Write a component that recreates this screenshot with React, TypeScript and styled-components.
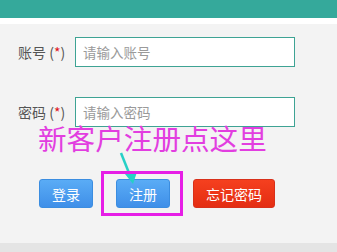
import styled, { createGlobalStyle } from "styled-components";

const GlobalStyle = createGlobalStyle`
  html, body {
    margin: 0;
    padding: 0;
    background: #f3f3f3;
    font-family: "Noto Sans CJK SC", "Noto Sans", sans-serif;
  }
`;

const App = () => {
  return (
    <Page>
      <GlobalStyle />
      <TopBar />
      <Strip />
      <Form>
        <Row>
          <Label>
            账号 (<Star>*</Star>)
          </Label>
          <Input placeholder="请输入账号" />
        </Row>
        <Row>
          <Label>
            密码 (<Star>*</Star>)
          </Label>
          <Input type="text" placeholder="请输入密码" />
        </Row>
        <Buttons>
          <Button>登录</Button>
          <Button>注册</Button>
          <Button $danger $wide>
            忘记密码
          </Button>
        </Buttons>
        <Note>新客户注册点这里</Note>
        <Arrow width="24" height="34" viewBox="0 0 24 34">
          <line x1="3" y1="1" x2="13" y2="26" stroke="#26d0c6" strokeWidth="2.5" />
          <polygon points="7,22 19,20 15,32" fill="#26d0c6" />
        </Arrow>
        <Highlight />
      </Form>
      <Bottom />
    </Page>
  );
};

const Page = styled.div`
  width: 337px;
  height: 252px;
  display: flex;
  flex-direction: column;
  overflow: hidden;
`;

const TopBar = styled.div`
  height: 18px;
  background: #35a99b;
`;

const Strip = styled.div`
  height: 6px;
  background: #ffffff;
`;

const Form = styled.div`
  position: relative;
  flex: 1;
  padding: 13px 0 0 18px;
  display: flex;
  flex-direction: column;
  gap: 30px;
`;

const Row = styled.div`
  display: flex;
  align-items: center;
  height: 30px;
`;

const Label = styled.span`
  width: 57px;
  font-size: 14px;
  line-height: 18px;
  color: #555;
  white-space: nowrap;
`;

const Star = styled.span`
  color: #e0161c;
`;

const Input = styled.input`
  box-sizing: border-box;
  width: 220px;
  height: 30px;
  border: 1px solid #3ea394;
  background: #fff;
  padding: 0 7px;
  font-family: inherit;
  font-size: 13.5px;
  outline: none;

  &::placeholder {
    color: #9a9a9a;
  }
`;

const Buttons = styled.div`
  display: flex;
  gap: 23px;
  margin-left: 21px;
  margin-top: 22px;
`;

const Button = styled.button<{ $danger?: boolean; $wide?: boolean }>`
  width: ${(p) => (p.$wide ? "82px" : "54px")};
  height: 29px;
  border: 1px solid ${(p) => (p.$danger ? "#d8301a" : "#3b8de0")};
  border-radius: 3px;
  background: ${(p) =>
    p.$danger
      ? "linear-gradient(#f5401f, #e42d12)"
      : "linear-gradient(#5aacf6, #3f8fe8)"};
  color: #fff;
  font-family: inherit;
  font-size: 14px;
  padding: 0;
`;

const Note = styled.div`
  position: absolute;
  left: 38px;
  top: 100px;
  font-size: 28.6px;
  line-height: 28px;
  color: #e23ee0;
  white-space: nowrap;
`;

const Arrow = styled.svg`
  position: absolute;
  left: 118px;
  top: 128px;
`;

const Highlight = styled.div`
  position: absolute;
  left: 101px;
  top: 147px;
  width: 76px;
  height: 39px;
  border: 3px solid #e61ee6;
`;

const Bottom = styled.div`
  height: 9px;
  background: #e4e4e4;
`;

export default App;
